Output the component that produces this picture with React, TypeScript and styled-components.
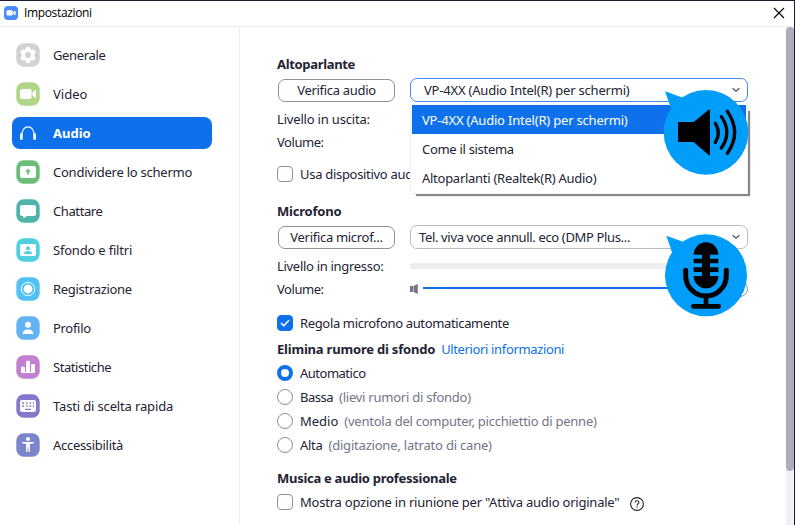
import React from "react";
import styled, { createGlobalStyle, css } from "styled-components";

const Global = createGlobalStyle`
  *{box-sizing:border-box}
  html,body{margin:0;padding:0;overflow:hidden;background:#fff}
  body{font-family:"Noto Sans","Open Sans",sans-serif;font-size:13px;color:#232333}
`;

const Window = styled.div`
  width:795px;height:525px;display:flex;flex-direction:column;
  border-top:1px solid #1b1b30;border-right:1px solid #1b1b30;background:#fff;
`;
const TitleBar = styled.header`
  flex:none;height:26px;display:flex;align-items:center;padding:0 9px 1px 4px;
  border-bottom:1px solid #ededf4;color:#000;
`;
const Title = styled.span`
  margin-left:6px;flex:1;font-family:"Open Sans",sans-serif;font-size:12px;line-height:16px;letter-spacing:-.35px;
`;
const Body = styled.div`flex:1;min-height:0;display:flex;`;
const Sidebar = styled.nav`
  width:240px;flex:none;border-right:1px solid #ededf4;padding:12px 0 0 12px;
  display:flex;flex-direction:column;gap:7px;
`;
const NavItem = styled.div<{ $active?: boolean }>`
  width:200px;height:32px;flex:none;border-radius:8px;display:flex;align-items:center;gap:13px;padding-left:4px;
  ${p => p.$active && css`background:#0e71eb;color:#fff;font-weight:700;`}
`;
const Main = styled.main`flex:1;padding:0 0 0 37px;display:flex;flex-direction:column;`;
const Row = styled.div<{ $top: number; $h?: number }>`
  flex:none;height:${p => p.$h ?? 22}px;margin-top:${p => p.$top}px;display:flex;align-items:center;white-space:nowrap;
`;
const Text = styled.span<{ $ls?: number }>`
  line-height:18px;white-space:nowrap;letter-spacing:${p => p.$ls ?? -0.3}px;
`;
const Heading = styled(Text).attrs({ as: "strong" })`font-weight:700;`;
const Label = styled(Text)`width:133px;flex:none;`;
const Hint = styled(Text)`color:#747487;margin-left:6px;`;
const Link = styled(Text)`color:#0e71eb;margin-left:6px;`;
const Button = styled.button`
  width:117px;height:23px;margin:1px 15px 0 1px;padding:0 0 1px;border:1px solid #909096;border-radius:7px;background:#fff;
  font:inherit;color:inherit;display:flex;align-items:center;justify-content:center;
`;
const Select = styled.div<{ $open?: boolean }>`
  position:relative;width:338px;height:24px;border:1px solid ${p => (p.$open ? "#3f8bf0" : "#babacc")};border-radius:7px;
  display:flex;align-items:center;justify-content:space-between;padding:0 7px 1px ${p => (p.$open ? 13 : 8)}px;
`;
const Menu = styled.div`
  position:absolute;left:-1px;top:26px;width:338px;height:89px;background:#fff;border:1px solid #f0f0f2;border-top:0;
  z-index:2;box-shadow:4px 4px 1px -2px #888;
`;
const Option = styled.div<{ $on?: boolean }>`
  height:29px;margin:0 1px;padding:0 0 0 10px;display:flex;align-items:center;
  ${p => p.$on && css`background:#0e71eb;color:#fff;`}
`;
const Check = styled.span<{ $on?: boolean }>`
  width:16px;height:16px;flex:none;margin-right:7px;border-radius:4px;display:flex;
  border:1px solid ${p => (p.$on ? "#0e71eb" : "#909096")};background:${p => (p.$on ? "#0e71eb" : "#fff")};
`;
const Radio = styled.span<{ $on?: boolean }>`
  width:16px;height:16px;flex:none;margin-right:7px;border-radius:50%;background:#fff;
  border:${p => (p.$on ? "4px solid #0e71eb" : "1px solid #909096")};
`;
const Meter = styled.div`width:338px;height:6px;border-radius:3px;background:#ededed;`;
const Track = styled.div`width:310px;height:2px;margin:-2px 0 0 4px;background:#0e71eb;`;
const Thumb = styled.span`
  width:16px;height:16px;margin:-1px 0 0 -1px;border:1px solid #909096;border-radius:50%;
`;
const Help = styled.span`display:flex;margin:3px 0 0 11px;`;
const Scroll = styled.div`width:8px;flex:none;background:#f1f1f6;`;
const ScrollThumb = styled.div`height:444px;border-radius:4px;background:#aeaeb8;`;
const Bubble = styled.svg<{ $top: number }>`
  position:absolute;z-index:3;left:253px;top:${p => p.$top}px;width:86px;height:87px;overflow:visible;
`;

const Tile = ({ color, children }: { color: string; children?: React.ReactNode }) => (
  <svg width="24" height="24" viewBox="0 0 24 24" fill="#fff">
    <rect x=".3" y=".3" width="23.4" height="23.4" rx="7.5" fill={color} />
    {children}
  </svg>
);

const GearIcon = () => (
  <Tile color="#d2d2d2">
    {[0, 60, 120, 180, 240, 300].map(a => (
      <circle key={a} cx="12" cy="6.3" r="2.5" transform={`rotate(${a} 12 12)`} />
    ))}
    <circle cx="12" cy="12" r="6.2" /><circle cx="12" cy="12" r="3" fill="#d2d2d2" />
  </Tile>
);
const VideoIcon = () => (
  <Tile color="#afd787">
    <rect x="4" y="7" width="11.6" height="10" rx="2" /><path d="M16.4 10.4 20 7.6v8.8l-3.6-2.8z" />
  </Tile>
);
const HeadphonesIcon = () => (
  <svg width="24" height="24" viewBox="0 0 24 24" fill="none" stroke="#fff">
    <path d="M5.9 14.5C5.2 3 18.8 3 18.1 14.5" strokeWidth="1.1" />
    <path d="M5.4 13.6v4.2M18.6 13.6v4.2" strokeWidth="2.6" strokeLinecap="round" />
  </svg>
);
const ShareIcon = () => (
  <Tile color="#6abe79">
    <rect x="4" y="6" width="16" height="12" rx="2" />
    <path d="m12 8.7 3 3h-2.1v2.8h-1.8v-2.8H9z" fill="#6abe79" />
  </Tile>
);
const ChatIcon = () => (
  <Tile color="#4fb5ab">
    <path d="M6 6h12q2 0 2 2v7q0 2-2 2h-7l-3.7 2.3V17H6q-2 0-2-2V8q0-2 2-2z" />
  </Tile>
);
const BackgroundIcon = () => (
  <Tile color="#50cfdf">
    <rect x="4" y="6" width="16" height="12" rx="2" />
    <circle cx="12" cy="10.2" r="2" fill="#50cfdf" /><path d="M8 16q0-3 4-3t4 3z" fill="#50cfdf" />
  </Tile>
);
const RecordIcon = () => (
  <Tile color="#51c1f7">
    <circle cx="12" cy="12" r="6.7" fill="none" stroke="#fff" /><circle cx="12" cy="12" r="4.4" />
  </Tile>
);
const ProfileIcon = () => (
  <Tile color="#63b3f4"><circle cx="12" cy="8.8" r="3" /><path d="M6.7 18q0-4.6 5.3-4.6t5.3 4.6z" /></Tile>
);
const StatsIcon = () => (
  <Tile color="#c181d0">
    <path d="M5 12.5q0-.8.8-.8h2.4q.8 0 .8.8V18H5zM10 6.7q0-1 1-1h2q1 0 1 1V18h-4zM15 9.8q0-.8.8-.8h2.4q.8 0 .8.8V18h-4z" />
    <path d="M5 17h14v1H5z" />
  </Tile>
);
const KeyboardIcon = () => (
  <Tile color="#8578cc">
    <rect x="4" y="6" width="16" height="12" rx="2" />
    <path d="M6 9h2m2 0h1.6m2 0h1.6m1.6 0H18M6 12h2m2 0h1.6m2 0h1.6m1.6 0H18M9 15.3h6" stroke="#8578cc" strokeWidth="1.3" />
  </Tile>
);
const AccessIcon = () => (
  <Tile color="#7986cb">
    <circle cx="12" cy="6" r="2" />
    <path d="M6 8.9h12v1.3l-4.1.8v8h-1.3l-.3-4.6h-.6l-.3 4.6h-1.3v-8L6 10.2z" />
  </Tile>
);
const Chevron = () => (
  <svg width="8" height="6" viewBox="0 0 8 6" fill="none" stroke="#555565" strokeWidth="1.3"><path d="m.7 1.2 3.3 3 3.3-3" /></svg>
);
const VolumeIcon = () => (
  <svg width="9" height="10" viewBox="0 0 9 10" fill="#747487"><path d="M0 2h3v6H0zM3.5 2 7.8 0v10L3.5 8z" /></svg>
);
const HelpIcon = () => (
  <svg width="14" height="14" viewBox="0 0 14 14" fill="none" stroke="#232333" strokeWidth="1.1">
    <circle cx="7" cy="7" r="6.4" /><path d="M5.2 5.6c0-2.5 3.7-2.3 3.7-.2 0 1.4-1.8 1.4-1.8 3M7.1 9.3v1.3" />
  </svg>
);
const SpeakerBubble = () => (
  <Bubble $top={11} viewBox="192 60 258 261">
    <path d="M195 64 249 83 214 118z" fill="#009dfa" />
    <circle cx="318" cy="187" r="127" fill="#009dfa" />
    <path d="M237 156h44l45-37q4-2 4 3v130q0 5-4 3l-45-39h-44q-3 0-3-3v-54q0-3 3-3z" fill="#000" />
    <path d="M346 160q18 28 0 57M364 140q33 47 0 94M382 124q44 63 0 126" fill="none" stroke="#000" strokeWidth="10" strokeLinecap="round" />
  </Bubble>
);
const MicBubble = () => (
  <Bubble $top={9} viewBox="192 75 258 261">
    <path d="M199 77 251 96 217 130z" fill="#009dfa" />
    <circle cx="318" cy="196" r="123" fill="#009dfa" />
    <rect x="281" y="97" width="74" height="138" rx="37" fill="#000" />
    <path d="M279 140h27M330 140h27M279 166h27M330 166h27M279 192h27M330 192h27" stroke="#009dfa" strokeWidth="12" />
    <path d="M257 181v16a61 61 0 0 0 122 0v-16" fill="none" stroke="#000" strokeWidth="15" strokeLinecap="round" />
    <path d="M318 258v30M280 289h76" fill="none" stroke="#000" strokeWidth="14" strokeLinecap="round" />
  </Bubble>
);

const NAV: [string, React.FC, number][] = [
  ["Generale", GearIcon, -0.35],
  ["Video", VideoIcon, 0],
  ["Audio", HeadphonesIcon, 0],
  ["Condividere lo schermo", ShareIcon, -0.24],
  ["Chattare", ChatIcon, -0.4],
  ["Sfondo e filtri", BackgroundIcon, -0.2],
  ["Registrazione", RecordIcon, -0.3],
  ["Profilo", ProfileIcon, -0.3],
  ["Statistiche", StatsIcon, -0.45],
  ["Tasti di scelta rapida", KeyboardIcon, -0.15],
  ["Accessibilità", AccessIcon, -0.3],
];
const NOISE: [string, string, number, number][] = [
  ["Bassa", "(lievi rumori di sfondo)", -0.5, -0.24],
  ["Medio", "(ventola del computer, picchiettio di penne)", 0, -0.24],
  ["Alta", "(digitazione, latrato di cane)", -0.3, -0.2],
];

export default function App() {
  return (
    <>
      <Global />
      <Window>
        <TitleBar>
          <svg width="14" height="14" viewBox="0 0 14 14">
            <rect width="14" height="14" rx="4" fill="#4a8cff" />
            <rect x="2.5" y="4.3" width="6.2" height="5.2" rx="1.2" fill="#fff" /><path d="m9.2 6.2 2.3-1.7v5L9.2 7.8z" fill="#fff" />
          </svg>
          <Title>Impostazioni</Title>
          <svg width="12" height="12" viewBox="0 0 12 12" stroke="#000" strokeWidth="1.1"><path d="m1 1 10 10M11 1 1 11" /></svg>
        </TitleBar>
        <Body>
          <Sidebar>
            {NAV.map(([name, Icon, ls]) => (
              <NavItem key={name} $active={name === "Audio"}><Icon /><Text $ls={ls}>{name}</Text></NavItem>
            ))}
          </Sidebar>
          <Main>
            <Row $top={26}><Heading $ls={-0.33}>Altoparlante</Heading></Row>
            <Row $top={3} $h={24}>
              <Button><Text>Verifica audio</Text></Button>
              <Select $open>
                <Text $ls={-0.2}>VP-4XX (Audio Intel(R) per schermi)</Text><Chevron />
                <Menu>
                  <Option $on><Text $ls={-0.2}>VP-4XX (Audio Intel(R) per schermi)</Text></Option>
                  <Option><Text>Come il sistema</Text></Option>
                  <Option><Text $ls={-0.27}>Altoparlanti (Realtek(R) Audio)</Text></Option>
                </Menu>
                <SpeakerBubble />
              </Select>
            </Row>
            <Row $top={6}><Label $ls={-0.18}>Livello in uscita:</Label></Row>
            <Row $top={1}><Label $ls={-0.45}>Volume:</Label></Row>
            <Row $top={10}><Check /><Text>Usa dispositivo audio</Text></Row>
            <Row $top={15}><Heading $ls={-0.2}>Microfono</Heading></Row>
            <Row $top={3} $h={24}>
              <Button><Text>Verifica microf...</Text></Button>
              <Select>
                <Text $ls={-0.35}>Tel. viva voce annull. eco (DMP Plus...</Text><Chevron />
                <MicBubble />
              </Select>
            </Row>
            <Row $top={6}><Label>Livello in ingresso:</Label><Meter /></Row>
            <Row $top={1}><Label $ls={-0.45}>Volume:</Label><VolumeIcon /><Track /><Thumb /></Row>
            <Row $top={12}>
              <Check $on><svg width="14" height="14" viewBox="0 0 14 14" fill="none" stroke="#fff" strokeWidth="1.5"><path d="m3 7 2.7 2.7L11 4.3" /></svg></Check>
              <Text $ls={-0.35}>Regola microfono automaticamente</Text>
            </Row>
            <Row $top={4}><Heading $ls={-0.2}>Elimina rumore di sfondo</Heading><Link $ls={-0.36}>Ulteriori informazioni</Link></Row>
            <Row $top={2}><Radio $on /><Text $ls={-0.5}>Automatico</Text></Row>
            {NOISE.map(([name, hint, a, b]) => (
              <Row key={name} $top={2}><Radio /><Text $ls={a}>{name}</Text><Hint $ls={b}>{hint}</Hint></Row>
            ))}
            <Row $top={11}><Heading $ls={-0.28}>Musica e audio professionale</Heading></Row>
            <Row $top={2}><Check /><Text $ls={-0.22}>Mostra opzione in riunione per "Attiva audio originale"</Text><Help><HelpIcon /></Help></Row>
          </Main>
          <Scroll><ScrollThumb /></Scroll>
        </Body>
      </Window>
    </>
  );
}
